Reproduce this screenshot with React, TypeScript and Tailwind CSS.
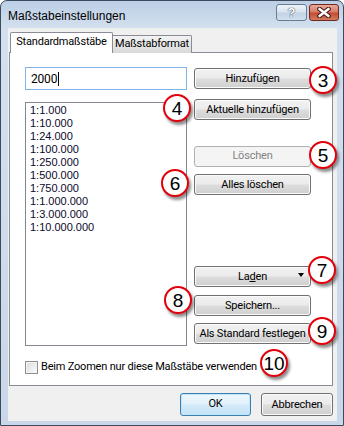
import React from "react";

const btn =
  "flex items-center justify-center whitespace-nowrap rounded-[3px] border border-[#707070] bg-[linear-gradient(#f2f2f2_0%,#ebebeb_48%,#dddddd_52%,#cfcfcf_100%)] shadow-[inset_0_0_0_1px_#fbfbfb] text-[11px] leading-none text-black";

function Button({ label, className = "" }: { label: React.ReactNode; className?: string }) {
  return <div className={`${btn} ${className}`}>{label}</div>;
}

function Marker({ n, className }: { n: number; className: string }) {
  return (
    <div
      className={`absolute flex h-[28px] w-[28px] items-center justify-center rounded-full border-2 border-[#e3000b] bg-white font-['Liberation_Sans',Arial,sans-serif] text-[19px] leading-none tracking-normal text-black shadow-[2px_3px_3px_rgba(0,0,0,0.45)] ${className}`}
    >
      {n}
    </div>
  );
}

const scales = [
  "1:1.000",
  "1:10.000",
  "1:24.000",
  "1:100.000",
  "1:250.000",
  "1:500.000",
  "1:750.000",
  "1:1.000.000",
  "1:3.000.000",
  "1:10.000.000",
];

export default function App() {
  return (
    <div className="relative h-[426px] w-[344px] overflow-hidden bg-white font-['Roboto','Liberation_Sans',sans-serif] text-[11px] tracking-[-0.2px] text-black">
      <div className="flex h-[426px] w-[344px] flex-col rounded-t-[7px] border border-[#3c4a5b] bg-[linear-gradient(#bccfe6_0px,#d3e0ef_28px,#c8d7e9_100%)]">
        {/* title bar */}
        <div className="flex h-[27px] items-start pl-[7px]">
          <span className="mt-[6px] font-['Liberation_Sans',Arial,sans-serif] text-[12px] tracking-normal text-black">Maßstabeinstellungen</span>
          <div className="ml-auto mr-[4px] mt-[3px] flex gap-[2px]">
            <div className="flex h-[17px] w-[31px] items-center justify-center rounded-[3px] border border-[#6b7c92] bg-[linear-gradient(#eef3f9_0%,#d8e3ef_48%,#c2d2e5_52%,#d2dfee_100%)]">
              <span className="font-['Liberation_Sans',Arial,sans-serif] text-[13px] font-bold leading-none tracking-normal text-white [text-shadow:0_0_1px_#25364a,0_0_1px_#25364a]">?</span>
            </div>
            <div className="flex h-[17px] w-[30px] items-center justify-center rounded-[3px] border border-[#6f2a1e] bg-[linear-gradient(#e9a99b_0%,#d67b66_48%,#c44a30_52%,#d27a5e_100%)]">
              <svg width="16" height="11" viewBox="0 0 16 11">
                <path d="M3.5 2 L12.5 9 M12.5 2 L3.5 9" stroke="#41160d" strokeWidth="4.6" strokeLinecap="round" />
                <path d="M3.5 2 L12.5 9 M12.5 2 L3.5 9" stroke="#ffffff" strokeWidth="2.6" strokeLinecap="round" />
              </svg>
            </div>
          </div>
        </div>

        {/* client */}
        <div className="ml-[7px] mr-[6px] flex h-[393px] flex-col bg-[#f0f0f0]">
          {/* tabs */}
          <div className="relative z-10 ml-[2px] mt-[4px] flex items-end">
            <div className="flex h-[21px] w-[103px] items-center justify-center whitespace-nowrap rounded-t-[2px] border border-b-0 border-[#898c95] bg-white pb-[1px]">
              Standardmaßstäbe
            </div>
            <div className="flex h-[18px] w-[79px] items-center justify-center whitespace-nowrap rounded-tr-[2px] border border-l-0 border-b-0 border-[#898c95] bg-[linear-gradient(#f3f3f3,#d9d9d9)]">
              Maßstabformat
            </div>
          </div>

          {/* panel */}
          <div className="-mt-px ml-[1px] mr-[4px] flex h-[334px] flex-col border border-[#898c95] bg-white">
            <div className="flex">
              {/* left column */}
              <div className="ml-[15px] flex w-[162px] flex-col">
                <div className="mt-[14px] flex h-[23px] items-center border border-[#7eb4ea] bg-white pl-[5px] text-[12px]">
                  <span>2000</span>
                  <span className="ml-px h-[14px] border-l border-black" />
                </div>
                <div className="mt-[12px] flex h-[244px] flex-col border border-[#828790] bg-white pl-[4px] pt-[1px] font-['Liberation_Sans',Arial,sans-serif] text-[11px] leading-[13px] tracking-normal text-[#0a0a2a]">
                  {scales.map((s) => (
                    <div key={s}>{s}</div>
                  ))}
                </div>
              </div>

              {/* right column */}
              <div className="ml-[7px] flex w-[117px] flex-col">
                <Button label="Hinzufügen" className="mt-[15px] h-[21px]" />
                <Button label="Aktuelle hinzufügen" className="mt-[10px] h-[21px]" />
                <div className="mt-[26px] flex h-[21px] items-center justify-center rounded-[3px] border border-[#adb2b5] bg-[#f4f4f4] text-[#838383]">
                  Löschen
                </div>
                <Button label="Alles löschen" className="mt-[7px] h-[21px]" />
                <Button
                  label={
                    <div className="relative flex w-full items-center justify-center">
                      <span>
                        La<span className="underline">d</span>en
                      </span>
                      <span className="absolute right-[6px] top-[2px] h-0 w-0 border-x-[3px] border-t-[4px] border-x-transparent border-t-black" />
                    </div>
                  }
                  className="mt-[71px] h-[21px]"
                />
                <Button label="Speichern..." className="mt-[8px] h-[21px]" />
                <Button label="Als Standard festlegen" className="mt-[7px] h-[21px]" />
              </div>
            </div>

            {/* checkbox */}
            <div className="ml-[15px] mt-[13px] flex items-center">
              <div className="h-[13px] w-[13px] border border-[#8f8f8f] bg-[linear-gradient(135deg,#dcdcdc,#fbfbfb)] shadow-[inset_0_0_0_1px_#f4f4f4]" />
              <span className="ml-[3px]">Beim Zoomen nur diese Maßstäbe verwenden</span>
            </div>
          </div>

          {/* dialog buttons */}
          <div className="mr-[4px] mt-[7px] flex justify-end gap-[10px]">
            <div className="flex h-[23px] w-[71px] items-center justify-center rounded-[3px] border border-[#3c7fb1] bg-[linear-gradient(#eef7fd_0%,#e3f1fb_48%,#d3eaf9_52%,#c4e2f7_100%)] shadow-[inset_0_0_0_1px_#bfe4fb]">
              OK
            </div>
            <Button label="Abbrechen" className="h-[23px] w-[72px]" />
          </div>
        </div>
      </div>

      {/* annotation markers */}
      <Marker n={3} className="left-[309px] top-[66px]" />
      <Marker n={4} className="left-[163px] top-[94px]" />
      <Marker n={5} className="left-[309px] top-[141px]" />
      <Marker n={6} className="left-[161px] top-[169px]" />
      <Marker n={7} className="left-[308px] top-[256px]" />
      <Marker n={8} className="left-[164px] top-[286px]" />
      <Marker n={9} className="left-[308px] top-[317px]" />
      <Marker n={10} className="left-[260px] top-[349px]" />
    </div>
  );
}
